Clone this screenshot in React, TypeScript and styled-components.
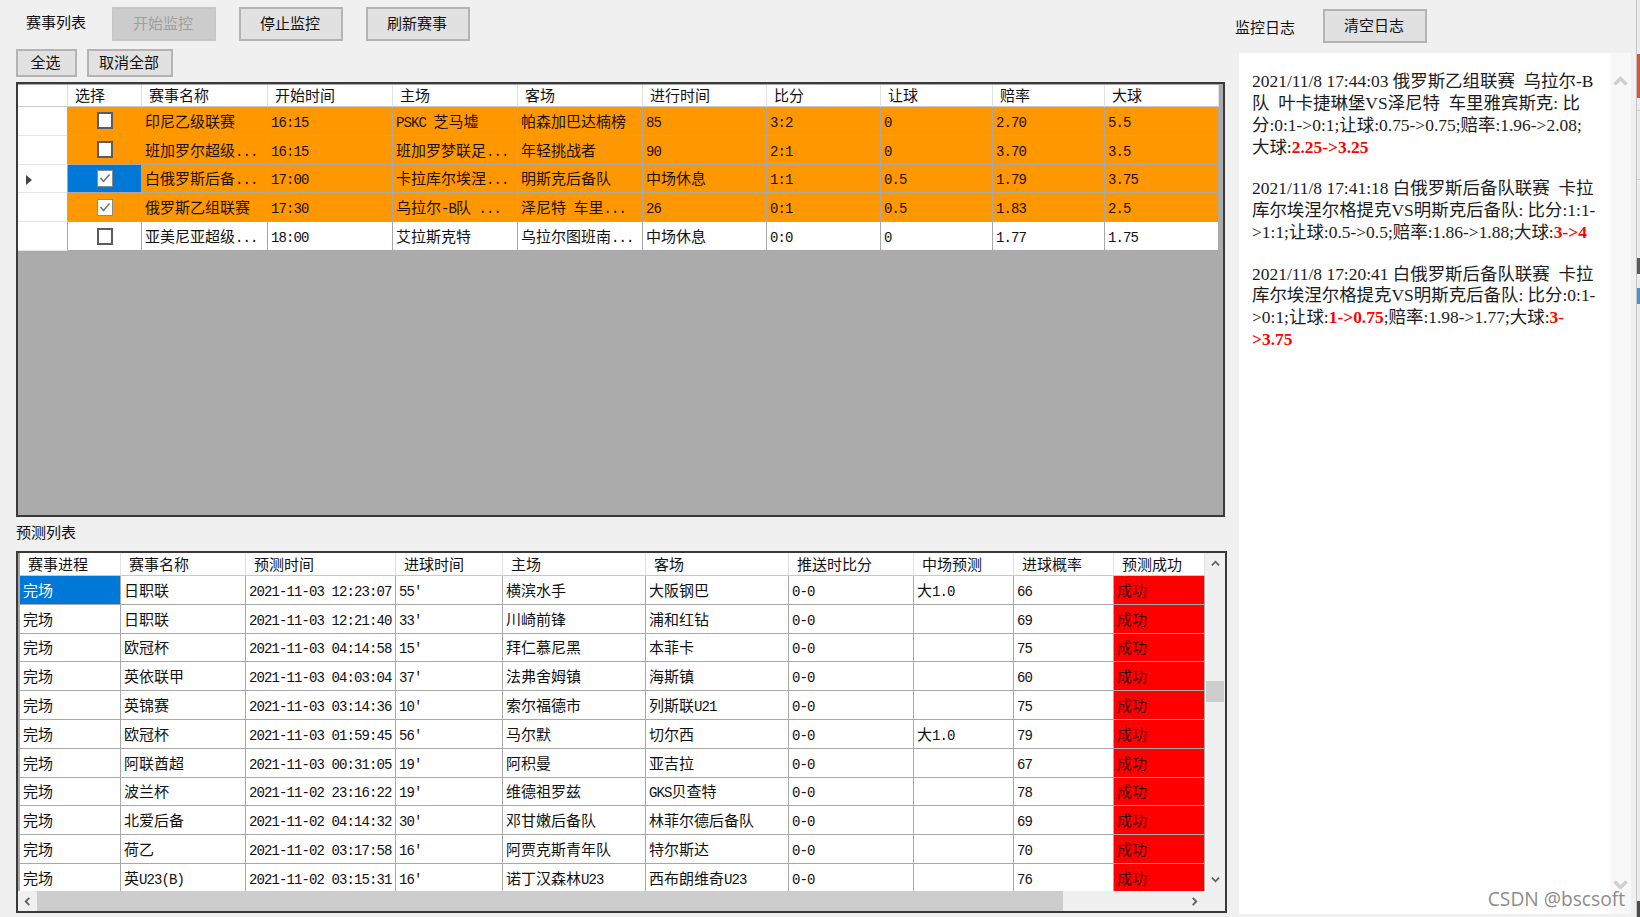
import React from 'react';
import styled, { createGlobalStyle } from 'styled-components';

const GlobalStyle = createGlobalStyle`
  html, body {
    margin: 0;
    padding: 0;
    background: #f0f0f0;
  }
  * {
    box-sizing: border-box;
  }
`;

const CJK = `"Noto Sans CJK SC", "Liberation Sans", sans-serif`;

const Page = styled.div`
  display: flex;
  width: 1640px;
  height: 917px;
  overflow: hidden;
  position: relative;
  background: #f0f0f0;
  color: #111;
  font-family: ${CJK};
  font-size: 15px;
`;

const LeftColumn = styled.div`
  width: 1236px;
  flex: none;
  display: flex;
  flex-direction: column;
  padding: 7px 0 0 16px;
`;

const RightColumn = styled.div`
  width: 400px;
  flex: none;
  display: flex;
  flex-direction: column;
  padding-top: 9px;
`;

const TopBar = styled.div`
  display: flex;
  align-items: center;
  gap: 23px;
  height: 34px;
  padding-left: 10px;
`;

const BarLabel = styled.span`
  width: 60px;
  margin-right: 3px;
  line-height: 20px;
  white-space: nowrap;
  position: relative;
  top: -2px;
`;

const SelectBar = styled.div`
  display: flex;
  gap: 10px;
  height: 28px;
  margin-top: 8px;
`;

const Button = styled.button<{ $width: number }>`
  width: ${p => p.$width}px;
  height: 100%;
  padding: 0 2px 2px 0;
  background: #e1e1e1;
  border: 2px solid #b4b4b4;
  border-radius: 0;
  color: #111;
  font-family: ${CJK};
  font-size: 15px;
  line-height: 20px;

  &:disabled {
    background: #cccccc;
    border-color: #c6c6c6;
    color: #a0a0a0;
  }
`;

const MatchTable = styled.div`
  width: 1209px;
  height: 435px;
  margin-top: 5px;
  padding-top: 1px;
  background: #ababab;
  border: 2px solid #3a3a3a;
`;

const Row = styled.div<{ $columns: string; $height: number }>`
  display: grid;
  grid-template-columns: ${p => p.$columns};
  height: ${p => p.$height}px;
`;

const HeaderCell = styled.div<{ $inset: number }>`
  display: flex;
  align-items: center;
  padding: 0 0 2px ${p => p.$inset}px;
  background: #fff;
  border-right: 1px solid #e2e2e2;
  border-bottom: 1px solid #c8c8c8;
  white-space: nowrap;
  overflow: hidden;
`;

const cellColors = {
  plain: { bg: '#ffffff', fg: '#111111' },
  orange: { bg: '#ff9800', fg: '#1d1000' },
  selected: { bg: '#0078d7', fg: '#ffffff' },
  red: { bg: '#ff0000', fg: '#3c0000' },
};

type CellTone = keyof typeof cellColors;

const Cell = styled.div<{ $tone?: CellTone }>`
  display: flex;
  align-items: center;
  padding: 0 0 1px 3px;
  background: ${p => cellColors[p.$tone ?? 'plain'].bg};
  color: ${p => cellColors[p.$tone ?? 'plain'].fg};
  border-right: 1px solid #a8a8a8;
  border-bottom: 1px solid #a8a8a8;
  white-space: nowrap;
  overflow: hidden;
`;

const RowHeaderCell = styled.div`
  display: flex;
  align-items: center;
  padding: 3px 0 0 8px;
  background: #fff;
  border-right: 1px solid #a8a8a8;
  border-bottom: 1px solid #e4e4e4;
`;

const CurrentMarker = styled.span`
  width: 0;
  height: 0;
  border-top: 5px solid transparent;
  border-bottom: 5px solid transparent;
  border-left: 6px solid #444;
`;

const CheckCell = styled(Cell)`
  justify-content: center;
  padding: 0;
`;

const CheckBox = styled.span<{ $checked: boolean }>`
  display: flex;
  align-items: center;
  justify-content: center;
  width: 16px;
  height: 17px;
  background: #fff;
  border: ${p => (p.$checked ? '1px solid #8a8a8a' : '2px solid #5c5c5c')};
`;

const Latin = styled.span`
  font-family: "Liberation Mono", monospace;
  font-size: 14px;
  letter-spacing: -0.9px;
`;

const SectionLabel = styled.div`
  height: 20px;
  margin-top: 6px;
  line-height: 18px;
`;

const PredictTable = styled.div`
  display: flex;
  flex-direction: column;
  width: 1211px;
  height: 362px;
  margin-top: 8px;
  background: #f0f0f0;
  border: 2px solid #3a3a3a;
`;

const PredictBody = styled.div`
  display: flex;
  height: 338px;
  flex: none;
`;

const PredictRows = styled.div`
  width: 1187px;
  flex: none;
  overflow: hidden;
  border-left: 2px solid #a8a8a8;
`;

const VerticalBar = styled.div`
  flex: 1;
  display: flex;
  flex-direction: column;
  align-items: center;
  position: relative;
  justify-content: space-between;
  padding: 6px 0 7px;
`;

const VerticalThumb = styled.div`
  position: absolute;
  top: 128px;
  left: 1px;
  right: 1px;
  height: 21px;
  background: #cdcdcd;
`;

const HorizontalBar = styled.div`
  flex: 1;
  display: flex;
  align-items: center;
  padding-left: 5px;
`;

const HorizontalThumb = styled.div`
  width: 1026px;
  height: 100%;
  margin: 0 5px 0 5px;
  background: #cdcdcd;
`;

const HorizontalEnd = styled.div`
  margin-left: 122px;
  display: flex;
`;

const HeaderRow = styled.div`
  display: flex;
  align-items: center;
  height: 34px;
`;

const HeaderLabel = styled.span`
  width: 87px;
  line-height: 20px;
  position: relative;
  top: 1px;
  left: -1px;
`;

const LogPanel = styled.div`
  display: flex;
  width: 392px;
  height: 861px;
  margin: 10px 0 0 3px;
  background: #fff;
`;

const LogBody = styled.div`
  width: 371px;
  flex: none;
  padding: 18px 0 0 13px;
`;

const LogEntry = styled.p`
  margin: 0 0 19.6px;
  font-family: "Liberation Serif", "Noto Sans CJK SC", serif;
  font-size: 17.45px;
  line-height: 21.9px;
  color: #1c1c1c;
  white-space: nowrap;
`;

const Changed = styled.b`
  color: #ff0000;
  font-weight: 700;
`;

const LogScroll = styled.div`
  flex: 1;
  display: flex;
  flex-direction: column;
  justify-content: space-between;
  align-items: center;
  padding: 21px 0 22px;
  background: #f8f8f8;
`;

const EdgeStrip = styled.div`
  position: absolute;
  top: 0;
  right: 0;
  bottom: 0;
  width: 4px;
  display: flex;
  flex-direction: column;
  border-left: 1px solid #c4c4c4;
`;

const EdgeSegment = styled.div<{ $color: string; $height: number }>`
  flex: none;
  height: ${p => p.$height}px;
  background: ${p => p.$color};
`;

const Watermark = styled.div`
  position: absolute;
  right: 15px;
  top: 886px;
  font-family: "Open Sans", "Noto Sans", sans-serif;
  font-size: 19.2px;
  line-height: 26px;
  color: #8d8d8d;
  white-space: nowrap;
`;

const Chevron = ({ dir, size = 9, color = '#606060', weight = 2 }: { dir: 'up' | 'down' | 'left' | 'right'; size?: number; color?: string; weight?: number }) => {
  const points = {
    up: '1,7 5,3 9,7',
    down: '1,3 5,7 9,3',
    left: '7,1 3,5 7,9',
    right: '3,1 7,5 3,9',
  }[dir];
  return (
    <svg width={size} height={size} viewBox="0 0 10 10">
      <polyline points={points} fill="none" stroke={color} strokeWidth={weight} />
    </svg>
  );
};

// 表格里西文是等宽半角，中文全角，拆开来分别设字体
const Mixed = ({ text }: { text: string }) => (
  <span>
    {text.split(/([\x20-\x7e′]+)/).map((part, i) =>
      /^[\x20-\x7e′]+$/.test(part) ? <Latin key={i}>{part}</Latin> : part
    )}
  </span>
);

const matchColumns = '50px 74px 126px 125px 125px 125px 124px 114px 112px 112px 114px';
const matchHeaders = ['', '选择', '赛事名称', '开始时间', '主场', '客场', '进行时间', '比分', '让球', '赔率', '大球'];

const matches = [
  { checked: false, orange: true, cells: ['印尼乙级联赛', '16:15', 'PSKC 芝马墟', '帕森加巴达楠榜', '85', '3:2', '0', '2.70', '5.5'] },
  { checked: false, orange: true, cells: ['班加罗尔超级...', '16:15', '班加罗梦联足...', '年轻挑战者', '90', '2:1', '0', '3.70', '3.5'] },
  { checked: true, orange: true, current: true, cells: ['白俄罗斯后备...', '17:00', '卡拉库尔埃涅...', '明斯克后备队', '中场休息', '1:1', '0.5', '1.79', '3.75'] },
  { checked: true, orange: true, cells: ['俄罗斯乙组联赛', '17:30', '乌拉尔-B队 ...', '泽尼特 车里...', '26', '0:1', '0.5', '1.83', '2.5'] },
  { checked: false, orange: false, cells: ['亚美尼亚超级...', '18:00', '艾拉斯克特', '乌拉尔图班南...', '中场休息', '0:0', '0', '1.77', '1.75'] },
];

const predictColumns = '101px 125px 150px 107px 143px 143px 125px 100px 100px 91px';
const predictHeaders = ['赛事进程', '赛事名称', '预测时间', '进球时间', '主场', '客场', '推送时比分', '中场预测', '进球概率', '预测成功'];

const predictions = [
  ['日职联', '2021-11-03 12:23:07', '55′', '横滨水手', '大阪钢巴', '大1.0', '66'],
  ['日职联', '2021-11-03 12:21:40', '33′', '川崎前锋', '浦和红钻', '', '69'],
  ['欧冠杯', '2021-11-03 04:14:58', '15′', '拜仁慕尼黑', '本菲卡', '', '75'],
  ['英依联甲', '2021-11-03 04:03:04', '37′', '法弗舍姆镇', '海斯镇', '', '60'],
  ['英锦赛', '2021-11-03 03:14:36', '10′', '索尔福德市', '列斯联U21', '', '75'],
  ['欧冠杯', '2021-11-03 01:59:45', '56′', '马尔默', '切尔西', '大1.0', '79'],
  ['阿联酋超', '2021-11-03 00:31:05', '19′', '阿积曼', '亚吉拉', '', '67'],
  ['波兰杯', '2021-11-02 23:16:22', '19′', '维德祖罗兹', 'GKS贝查特', '', '78'],
  ['北爱后备', '2021-11-02 04:14:32', '30′', '邓甘嫩后备队', '林菲尔德后备队', '', '69'],
  ['荷乙', '2021-11-02 03:17:58', '16′', '阿贾克斯青年队', '特尔斯达', '', '70'],
  ['英U23(B)', '2021-11-02 03:15:31', '16′', '诺丁汉森林U23', '西布朗维奇U23', '', '76'],
];

const edgeSegments = [
  { color: '#ececec', height: 54 },
  { color: '#d8552f', height: 44 },
  { color: '#ececec', height: 12 },
  { color: '#cfcfcf', height: 1 },
  { color: '#ececec', height: 68 },
  { color: '#cfcfcf', height: 1 },
  { color: '#ececec', height: 78 },
  { color: '#5a5a5a', height: 16 },
  { color: '#ececec', height: 14 },
  { color: '#4a90d0', height: 16 },
  { color: '#ececec', height: 597 },
  { color: '#4d4d4d', height: 16 },
];

const App = () => (
  <Page>
    <GlobalStyle />
    <LeftColumn>
      <TopBar>
        <BarLabel>赛事列表</BarLabel>
        <Button $width={104} disabled>开始监控</Button>
        <Button $width={104}>停止监控</Button>
        <Button $width={104}>刷新赛事</Button>
      </TopBar>
      <SelectBar>
        <Button $width={61}>全选</Button>
        <Button $width={86}>取消全部</Button>
      </SelectBar>

      <MatchTable>
        <Row $columns={matchColumns} $height={22}>
          {matchHeaders.map((title, i) => (
            <HeaderCell key={i} $inset={7}>{title}</HeaderCell>
          ))}
        </Row>
        {matches.map((match, r) => {
          const tone: CellTone = match.orange ? 'orange' : 'plain';
          return (
            <Row key={r} $columns={matchColumns} $height={28.8}>
              <RowHeaderCell>{match.current && <CurrentMarker />}</RowHeaderCell>
              <CheckCell $tone={match.current ? 'selected' : tone}>
                <CheckBox $checked={match.checked}>
                  {match.checked && (
                    <svg width="12" height="12" viewBox="0 0 12 12">
                      <polyline points="1.5,6 4.5,9.5 10.5,2.5" fill="none" stroke="#6a6a6a" strokeWidth="1.4" />
                    </svg>
                  )}
                </CheckBox>
              </CheckCell>
              {match.cells.map((value, c) => (
                <Cell key={c} $tone={tone}><Mixed text={value} /></Cell>
              ))}
            </Row>
          );
        })}
      </MatchTable>

      <SectionLabel>预测列表</SectionLabel>

      <PredictTable>
        <PredictBody>
          <PredictRows>
            <Row $columns={predictColumns} $height={23}>
              {predictHeaders.map(title => (
                <HeaderCell key={title} $inset={8}>{title}</HeaderCell>
              ))}
            </Row>
            {predictions.map((row, r) => (
              <Row key={r} $columns={predictColumns} $height={28.8}>
                <Cell $tone={r === 0 ? 'selected' : 'plain'}>完场</Cell>
                <Cell><Mixed text={row[0]} /></Cell>
                <Cell><Mixed text={row[1]} /></Cell>
                <Cell><Mixed text={row[2]} /></Cell>
                <Cell><Mixed text={row[3]} /></Cell>
                <Cell><Mixed text={row[4]} /></Cell>
                <Cell><Mixed text="0-0" /></Cell>
                <Cell><Mixed text={row[5]} /></Cell>
                <Cell><Mixed text={row[6]} /></Cell>
                <Cell $tone="red">成功</Cell>
              </Row>
            ))}
          </PredictRows>
          <VerticalBar>
            <Chevron dir="up" />
            <VerticalThumb />
            <Chevron dir="down" />
          </VerticalBar>
        </PredictBody>
        <HorizontalBar>
          <Chevron dir="left" />
          <HorizontalThumb />
          <HorizontalEnd>
            <Chevron dir="right" />
          </HorizontalEnd>
        </HorizontalBar>
      </PredictTable>
    </LeftColumn>

    <RightColumn>
      <HeaderRow>
        <HeaderLabel>监控日志</HeaderLabel>
        <Button $width={104}>清空日志</Button>
      </HeaderRow>
      <LogPanel>
        <LogBody>
          <LogEntry>
            2021/11/8 17:44:03 俄罗斯乙组联赛&nbsp;&nbsp;乌拉尔-B<br />
            队&nbsp;&nbsp;叶卡捷琳堡VS泽尼特&nbsp;&nbsp;车里雅宾斯克: 比<br />
            分:0:1-&gt;0:1;让球:0.75-&gt;0.75;赔率:1.96-&gt;2.08;<br />
            大球:<Changed>2.25-&gt;3.25</Changed>
          </LogEntry>
          <LogEntry>
            2021/11/8 17:41:18 白俄罗斯后备队联赛&nbsp;&nbsp;卡拉<br />
            库尔埃涅尔格提克VS明斯克后备队: 比分:1:1-<br />
            &gt;1:1;让球:0.5-&gt;0.5;赔率:1.86-&gt;1.88;大球:<Changed>3-&gt;4</Changed>
          </LogEntry>
          <LogEntry>
            2021/11/8 17:20:41 白俄罗斯后备队联赛&nbsp;&nbsp;卡拉<br />
            库尔埃涅尔格提克VS明斯克后备队: 比分:0:1-<br />
            &gt;0:1;让球:<Changed>1-&gt;0.75</Changed>;赔率:1.98-&gt;1.77;大球:<Changed>3-</Changed><br />
            <Changed>&gt;3.75</Changed>
          </LogEntry>
        </LogBody>
        <LogScroll>
          <Chevron dir="up" size={15} color="#d0d0d0" weight={2.4} />
          <Chevron dir="down" size={15} color="#d0d0d0" weight={2.4} />
        </LogScroll>
      </LogPanel>
    </RightColumn>

    <EdgeStrip>
      {edgeSegments.map((segment, i) => (
        <EdgeSegment key={i} $color={segment.color} $height={segment.height} />
      ))}
    </EdgeStrip>
    <Watermark>CSDN @bscsoft</Watermark>
  </Page>
);

export default App;
